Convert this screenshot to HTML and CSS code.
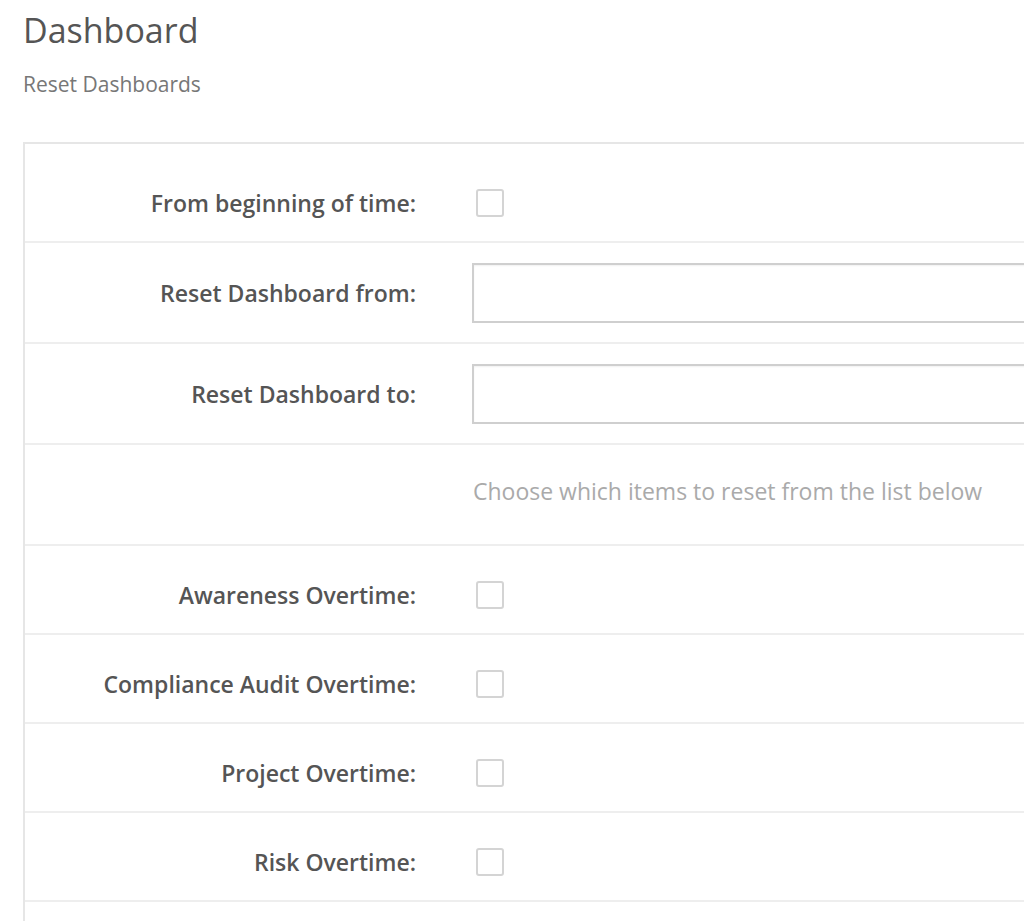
FILE: index.html
```html
<!DOCTYPE html>
<html>
<head>
<meta charset="utf-8">
<title>Dashboard</title>
<link rel="stylesheet" href="styles.css">
</head>
<body>
<div class="page">
  <h1 class="title">Dashboard</h1>
  <div class="subtitle">Reset Dashboards</div>
  <div class="panel">
    <div class="row row-first row-check">
      <label class="label">From beginning of time:</label>
      <div class="control"><span class="checkbox"></span></div>
    </div>
    <div class="row row-tall">
      <label class="label">Reset Dashboard from:</label>
      <div class="control"><input class="text-input" type="text"></div>
    </div>
    <div class="row row-tall">
      <label class="label">Reset Dashboard to:</label>
      <div class="control"><input class="text-input" type="text"></div>
    </div>
    <div class="row row-tall row-hint">
      <div class="label"></div>
      <div class="control hint">Choose which items to reset from the list below</div>
    </div>
    <div class="row row-check">
      <label class="label">Awareness Overtime:</label>
      <div class="control"><span class="checkbox"></span></div>
    </div>
    <div class="row row-check">
      <label class="label">Compliance Audit Overtime:</label>
      <div class="control"><span class="checkbox"></span></div>
    </div>
    <div class="row row-check">
      <label class="label">Project Overtime:</label>
      <div class="control"><span class="checkbox"></span></div>
    </div>
    <div class="row row-check">
      <label class="label">Risk Overtime:</label>
      <div class="control"><span class="checkbox"></span></div>
    </div>
  </div>
</div>
</body>
</html>
```
FILE: styles.css
```css
html, body {
  margin: 0;
  padding: 0;
  background: #fff;
  overflow: hidden;
}
body {
  font-family: "Open Sans", "Noto Sans", sans-serif;
  color: #555;
}
.page {
  padding: 10px 0 0 23px;
}
.title {
  margin: 0;
  font-size: 34px;
  font-weight: 400;
  line-height: 40px;
  color: #555;
}
.subtitle {
  margin-top: 21px;
  font-size: 21px;
  line-height: 26px;
  color: #777;
}
.panel {
  margin-top: 45px;
  width: 1100px;
  padding-bottom: 40px;
  border-top: 2px solid #e6e6e6;
  border-left: 2px solid #e6e6e6;
}
.row {
  display: grid;
  grid-template-columns: 391px 1fr;
  column-gap: 56px;
  align-items: center;
  border-bottom: 2px solid #eeeeee;
  box-sizing: border-box;
}
.row-tall {
  height: 101px;
}
.row-hint {
  padding-bottom: 8px;
}
.row-check {
  height: 89px;
  padding-top: 10px;
}
.row-first.row-check {
  height: 99px;
  padding-top: 21px;
}
.label {
  text-align: right;
  font-size: 23px;
  font-weight: 600;
  color: #555;
}
.control {
  display: flex;
  align-items: center;
}
.checkbox {
  display: block;
  width: 24px;
  height: 24px;
  margin-left: 4px;
  border: 2px solid #d4d4d4;
  border-radius: 3px;
  background: #fff;
}
.text-input {
  display: block;
  width: 100%;
  height: 60px;
  box-sizing: border-box;
  border: 2px solid #cfcfcf;
  border-radius: 0;
  background: #fff;
  box-shadow: inset 0 1px 2px rgba(0,0,0,0.06);
  font-family: inherit;
  font-size: 18px;
  padding: 0 12px;
  outline: none;
}
.hint {
  font-size: 23px;
  color: #aaaaaa;
  padding-left: 1px;
}
```
